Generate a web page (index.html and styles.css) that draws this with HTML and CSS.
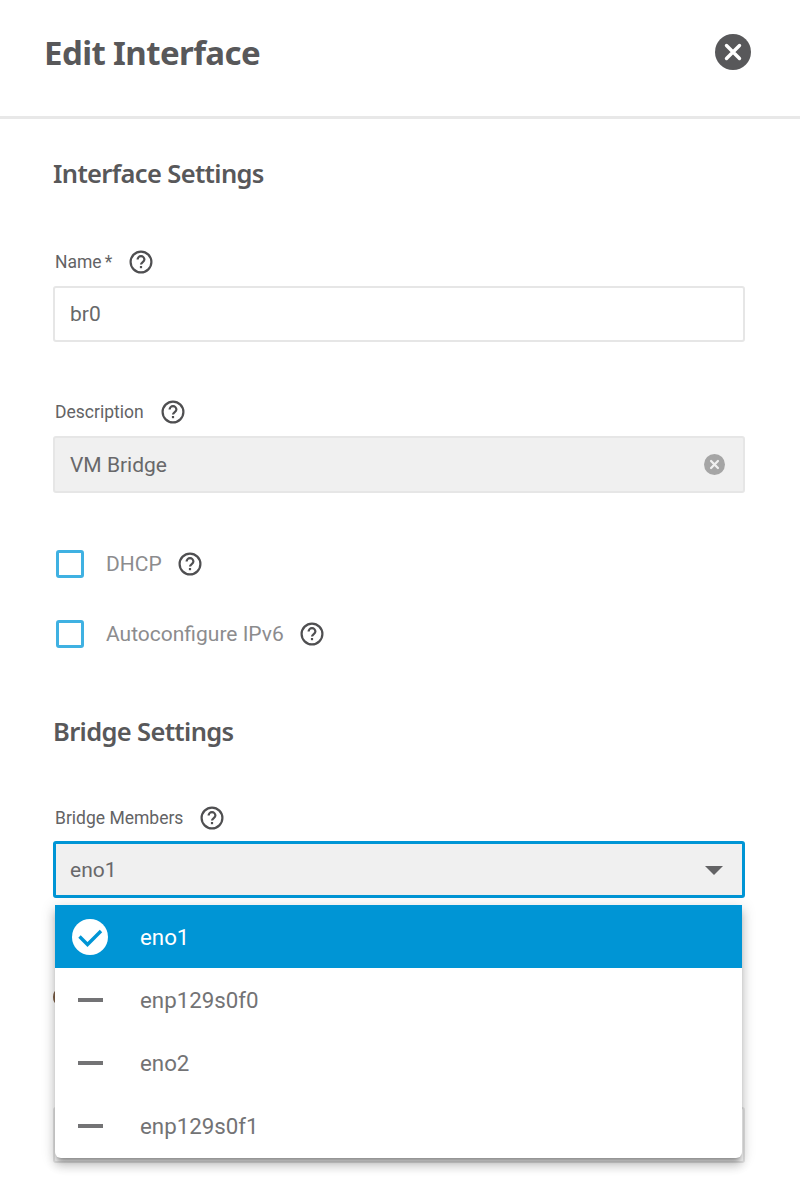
FILE: index.html
```html
<!DOCTYPE html>
<html lang="en">
<head>
<meta charset="utf-8">
<title>Edit Interface</title>
<link rel="stylesheet" href="styles.css">
</head>
<body>
<svg class="defs" width="0" height="0" aria-hidden="true">
  <symbol id="help" viewBox="0 0 24 24">
    <circle cx="12" cy="12" r="10.4" fill="none" stroke="currentColor" stroke-width="2.2"/>
    <path d="M8.6 9.6a3.4 3.4 0 0 1 6.8 0c0 2.3-3.4 2.6-3.4 5" fill="none" stroke="currentColor" stroke-width="2.2"/>
    <rect x="10.900" y="16" width="2.200" height="2.200" fill="currentColor"/>
  </symbol>
</svg>
<header class="header">
  <h1 class="title">Edit Interface</h1>
  <button class="close" type="button" aria-label="Close">
    <svg viewBox="0 0 36 36" width="36" height="36"><circle cx="18" cy="18" r="18" fill="#58585a"/><path d="M11.5 11.5l13 13M24.5 11.5l-13 13" stroke="#fff" stroke-width="3.4" stroke-linecap="round"/></svg>
  </button>
</header>
<main class="form">
  <h2 class="section section-first">Interface Settings</h2>
  <div class="field field-name">
    <div class="label">Name<span class="req">*</span><svg class="help"><use href="#help"/></svg></div>
    <div class="input input-name">br0</div>
  </div>
  <div class="field field-desc">
    <div class="label">Description<svg class="help"><use href="#help"/></svg></div>
    <div class="input input-filled">VM Bridge
      <svg class="clear" viewBox="0 0 22 22" width="21" height="21"><circle cx="11" cy="11" r="11" fill="#a5a5a5"/><path d="M7.4 7.4l7.2 7.2M14.600 7.4l-7.200 7.200" stroke="#f0f0f0" stroke-width="2.400" stroke-linecap="round"/></svg>
    </div>
  </div>
  <label class="check check-first"><span class="box"></span><span class="check-text">DHCP</span><svg class="help"><use href="#help"/></svg></label>
  <label class="check check-second"><span class="box"></span><span class="check-text">Autoconfigure IPv6</span><svg class="help"><use href="#help"/></svg></label>
  <h2 class="section section-bridge">Bridge Settings</h2>
  <div class="field field-bridge">
    <div class="label">Bridge Members<svg class="help"><use href="#help"/></svg></div>
    <div class="input input-filled input-focus">eno1<span class="caret"></span></div>
    <div class="behind-dot"></div>
    <div class="input behind-input"></div>
    <ul class="menu">
      <li class="item item-selected">
        <svg class="tick" viewBox="0 0 36 36" width="36" height="36"><circle cx="18" cy="18" r="18" fill="#fff"/><path d="M7.500 17.500l8 8L29 12" fill="none" stroke="#0095d5" stroke-width="3.400"/></svg>
        <span>eno1</span>
      </li>
      <li class="item"><span class="dash"></span><span>enp129s0f0</span></li>
      <li class="item"><span class="dash"></span><span>eno2</span></li>
      <li class="item"><span class="dash"></span><span>enp129s0f1</span></li>
    </ul>
  </div>
</main>
</body>
</html>
```
FILE: styles.css
```css
* { box-sizing: border-box; }
html, body { margin: 0; padding: 0; }
body {
  width: 800px;
  height: 1200px;
  overflow: hidden;
  background: #fff;
  color: #58585a;
  font-family: Roboto, "Liberation Sans", sans-serif;
}
.defs { position: absolute; }
.header {
  height: 119px;
  border-bottom: 3px solid #e8e8e8;
  padding: 0 49px 0 44px;
  display: flex;
  justify-content: space-between;
  align-items: flex-start;
}
.title {
  margin: 31px 0 0;
  font-family: "Noto Sans", sans-serif;
  font-size: 33px;
  line-height: 44px;
  font-weight: 700;
  letter-spacing: -0.6px;
}
.close {
  margin-top: 34px;
  padding: 0;
  border: 0;
  background: none;
  width: 36px;
  height: 36px;
  display: block;
}
.close svg { display: block; }
.form { padding: 0 55px 0 53px; }
.section {
  margin: 0;
  font-family: "Noto Sans", sans-serif;
  font-size: 25.5px;
  line-height: 36px;
  font-weight: 600;
  letter-spacing: -0.65px;
}
.section-first { margin-top: 36px; }
.section-bridge { margin-top: 65px; }
.label {
  display: flex;
  align-items: center;
  height: 24px;
  padding-left: 2px;
  font-size: 17.500px;
  color: #636365;
}
.req { margin-left: 3px; }
.help {
  width: 24px;
  height: 24px;
  color: #4f4f51;
  margin-left: 17px;
  flex: none;
}
.field-name { margin-top: 59px; }
.field-desc { margin-top: 58px; }
.field-bridge { margin-top: 57px; position: relative; }
.input {
  position: relative;
  height: 57px;
  margin-top: 12px;
  border: 2px solid #e6e6e6;
  border-radius: 3px;
  padding-left: 15px;
  display: flex;
  align-items: center;
  font-size: 21px;
  color: #68686a;
  background: #fff;
}
.input-name { height: 56px; }
.input-filled { background: #f0f0f0; }
.input-focus {
  border: 3px solid #0095d5;
  margin-top: 11px;
  padding: 1px 0 0 14px;
}
.clear { position: absolute; right: 18px; top: 16px; }
.caret {
  position: absolute;
  right: 19px;
  top: 22px;
  width: 0;
  height: 0;
  border-left: 9px solid transparent;
  border-right: 9px solid transparent;
  border-top: 9px solid #636365;
}
.check {
  display: flex;
  align-items: center;
  height: 28px;
  padding-left: 3px;
  font-size: 21px;
  color: #8c8c8e;
}
.check .help { margin-left: 16px; }
.check-first { margin-top: 57px; }
.check-second { margin-top: 42px; }
.box {
  width: 28px;
  height: 28px;
  border: 3px solid #3fb1e2;
  border-radius: 3px;
  margin-right: 22px;
  flex: none;
}
.behind-dot {
  position: absolute;
  left: 0;
  top: 184px;
  width: 8px;
  height: 14px;
  border-radius: 50%;
  background: #7d5f46;
}
.behind-input {
  position: absolute;
  left: 0;
  right: 0;
  top: 301px;
  margin: 0;
  height: 56px;
}
.menu {
  position: absolute;
  left: 2px;
  right: 3px;
  top: 99px;
  margin: 0;
  padding: 0;
  list-style: none;
  background: #fff;
  border-radius: 0 0 6px 6px;
  box-shadow: 0 5px 5px -3px rgba(0,0,0,.35), 0 8px 10px 1px rgba(0,0,0,.14), 0 3px 14px 2px rgba(0,0,0,.12);
}
.item {
  height: 63.2px;
  display: flex;
  align-items: center;
  padding-left: 17px;
  font-size: 22.300px;
  color: #737375;
}
.item > span:last-child { margin-left: 32px; }
.item-selected { background: #0095d5; color: #fff; }
.tick { flex: none; }
.dash {
  width: 25px;
  height: 4px;
  margin: 0 5px 0 6px;
  background: #737375;
  flex: none;
}
```
